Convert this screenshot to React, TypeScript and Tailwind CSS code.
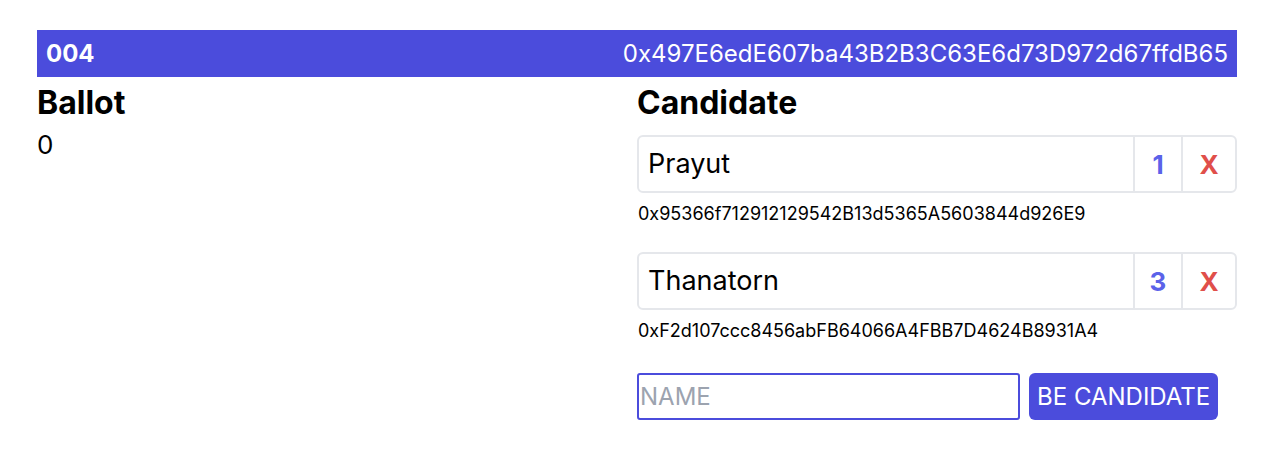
import React from "react";

type Candidate = {
  name: string;
  votes: number;
  address: string;
};

const candidates: Candidate[] = [
  { name: "Prayut", votes: 1, address: "0x95366f712912129542B13d5365A5603844d926E9" },
  { name: "Thanatorn", votes: 3, address: "0xF2d107ccc8456abFB64066A4FBB7D4624B8931A4" },
];

function CandidateCard({ c }: { c: Candidate }) {
  return (
    <div className="mb-[26px]">
      <div className="flex h-[58px] rounded-md border-2 border-[#e5e7eb] bg-white">
        <div className="flex flex-1 items-center pl-[9px] text-[27px] text-black">{c.name}</div>
        <div className="flex w-[48px] items-center justify-center border-l-2 border-[#e5e7eb] text-[26px] font-bold text-[#5b62e9]">
          {c.votes}
        </div>
        <div className="flex w-[54px] items-center justify-center border-l-2 border-[#e5e7eb] text-[26px] font-bold text-[#e04f4a]">
          X
        </div>
      </div>
      <div className="mt-[9px] pl-px text-[18px] leading-[24px] text-black">{c.address}</div>
    </div>
  );
}

export default function App() {
  return (
    <div className="min-h-screen bg-white font-['Inter',sans-serif]">
      <div className="mx-auto w-[1200px] pt-[30px]">
        <div className="flex h-[47px] items-center justify-between bg-[#4b4cdc] px-[9px] text-white">
          <span className="text-[24px] font-bold">004</span>
          <span className="text-[24px]">0x497E6edE607ba43B2B3C63E6d73D972d67ffdB65</span>
        </div>
        <div className="grid grid-cols-2">
          <div>
            <h2 className="mt-[6px] text-[32px] font-bold leading-[40px]">Ballot</h2>
            <div className="mt-[6px] text-[26px] leading-[32px]">0</div>
          </div>
          <div>
            <h2 className="mt-[6px] text-[32px] font-bold leading-[40px]">Candidate</h2>
            <div className="mt-[12px]">
              {candidates.map((c) => (
                <CandidateCard key={c.name} c={c} />
              ))}
            </div>
            <div className="mt-[30px] flex gap-[9px]">
              <input
                placeholder="NAME"
                className="h-[47px] w-[383px] rounded-[3px] border-2 border-[#4b4cdc] px-px text-[24px] placeholder:text-[#9ca3af] outline-none"
              />
              <button className="h-[47px] rounded-md bg-[#4b4cdc] px-[8px] text-[24px] text-white">
                BE CANDIDATE
              </button>
            </div>
          </div>
        </div>
      </div>
    </div>
  );
}
